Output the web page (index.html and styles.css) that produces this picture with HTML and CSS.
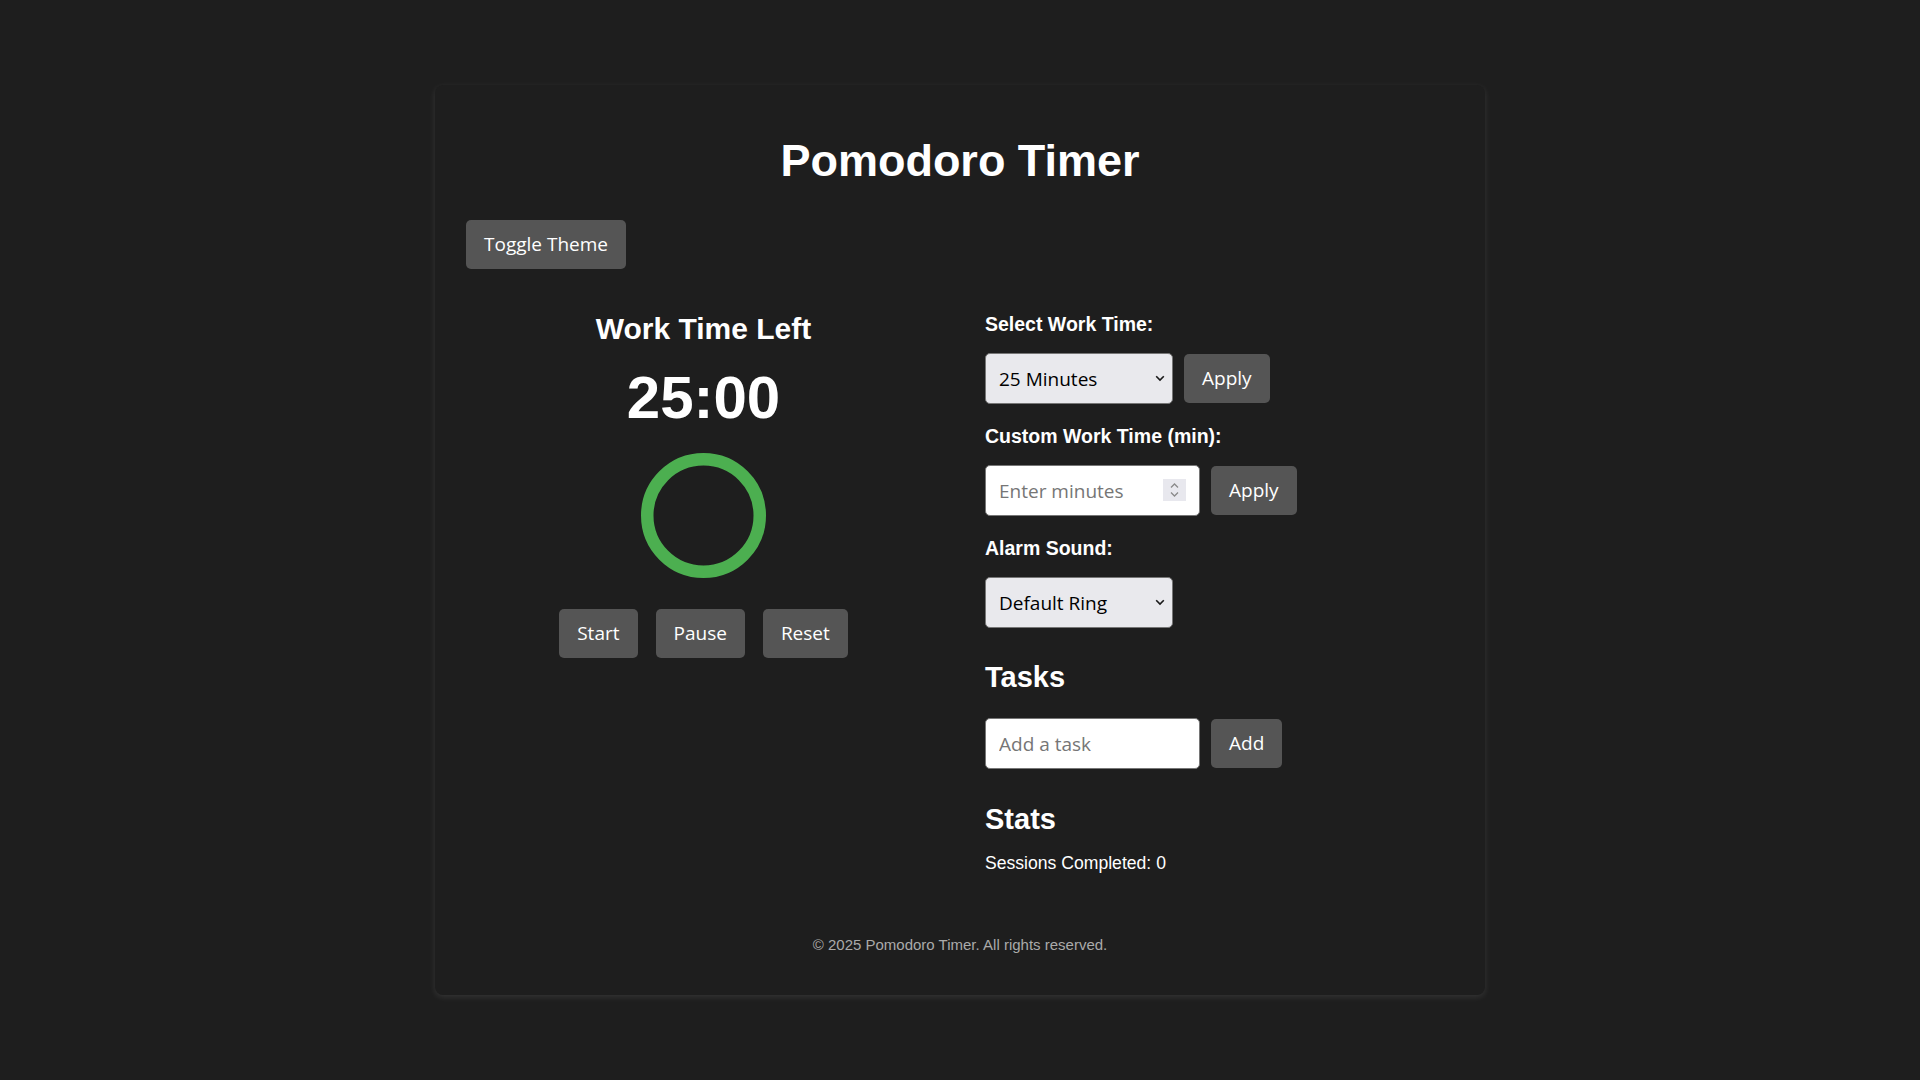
FILE: index.html
```html
<!DOCTYPE html>
<html lang="en">
<head>
<meta charset="utf-8">
<title>Pomodoro Timer</title>
<link rel="stylesheet" href="styles.css">
</head>
<body>
<div class="card">
  <h1 class="title">Pomodoro Timer</h1>
  <div class="toolbar"><button class="btn">Toggle Theme</button></div>
  <div class="main">
    <section class="timer">
      <h2 class="timer-label">Work Time Left</h2>
      <div class="time">25:00</div>
      <svg class="ring" width="125" height="125" viewBox="0 0 125 125">
        <circle cx="62.5" cy="62.5" r="56.25" fill="none" stroke="#4caf50" stroke-width="12.5"/>
      </svg>
      <div class="controls">
        <button class="btn">Start</button>
        <button class="btn">Pause</button>
        <button class="btn">Reset</button>
      </div>
    </section>
    <section class="settings">
      <div class="group">
        <label class="label">Select Work Time:</label>
        <div class="row">
          <span class="select-wrap">
            <select class="select"><option>25 Minutes</option><option>50 Minutes</option></select>
            <svg class="chev" width="10" height="7" viewBox="0 0 10 7"><path d="M1.2 1.2l3.8 3.8 3.8-3.8" fill="none" stroke="#1a1a1a" stroke-width="1.6"/></svg>
          </span>
          <button class="btn">Apply</button>
        </div>
      </div>
      <div class="group">
        <label class="label">Custom Work Time (min):</label>
        <div class="row">
          <span class="input-wrap">
            <input class="input num" type="number" placeholder="Enter minutes">
            <span class="spin"><svg width="23" height="22" viewBox="0 0 23 22"><path d="M8 8.5l3.5-3.5 3.5 3.5M8 13.5l3.5 3.5 3.5-3.5" fill="none" stroke="#8a8a8a" stroke-width="1.3"/></svg></span>
          </span>
          <button class="btn">Apply</button>
        </div>
      </div>
      <div class="group">
        <label class="label">Alarm Sound:</label>
        <div class="row">
          <span class="select-wrap">
            <select class="select"><option>Default Ring</option><option>Bell</option></select>
            <svg class="chev" width="10" height="7" viewBox="0 0 10 7"><path d="M1.2 1.2l3.8 3.8 3.8-3.8" fill="none" stroke="#1a1a1a" stroke-width="1.6"/></svg>
          </span>
        </div>
      </div>
      <h3 class="section-title">Tasks</h3>
      <div class="row">
        <input class="input" type="text" placeholder="Add a task">
        <button class="btn">Add</button>
      </div>
      <h3 class="section-title stats-title">Stats</h3>
      <p class="stat">Sessions Completed: 0</p>
    </section>
  </div>
  <footer class="footer">© 2025 Pomodoro Timer. All rights reserved.</footer>
</div>
</body>
</html>
```
FILE: styles.css
```css
html, body {
  margin: 0;
  padding: 0;
  background: #1e1e1e;
  color: #ffffff;
  font-family: "Liberation Sans", Arial, sans-serif;
}

body {
  display: flex;
  justify-content: center;
  align-items: flex-start;
  min-height: 100vh;
}

.card {
  box-sizing: border-box;
  width: 1050px;
  margin-top: 85px;
  padding: 52px 31px 41px 31px;
  background: #1e1e1e;
  border-radius: 8px;
  box-shadow: 0 2px 6px rgba(255, 255, 255, 0.1);
}

.title {
  margin: 0;
  font-size: 45px;
  line-height: 48px;
  font-weight: bold;
  text-align: center;
}

.toolbar {
  margin-top: 35px;
  display: flex;
}

.btn {
  font-family: "Open Sans", "Noto Sans", sans-serif;
  font-size: 19px;
  line-height: 27px;
  height: 49px;
  padding: 11px 18px;
  border: none;
  border-radius: 5px;
  background: #555555;
  color: #ffffff;
  box-sizing: border-box;
}

.main {
  margin-top: 42px;
  display: grid;
  grid-template-columns: 475px 1fr;
  column-gap: 44px;
  align-items: start;
}

.timer {
  text-align: center;
}

.timer-label {
  margin: 0;
  font-size: 30px;
  line-height: 36px;
  font-weight: bold;
}

.time {
  margin-top: 16px;
  font-size: 60px;
  line-height: 70px;
  font-weight: bold;
}

.ring {
  display: block;
  margin: 20px auto 0;
}

.controls {
  margin-top: 31px;
  display: flex;
  justify-content: center;
  gap: 18px;
}

.settings {
  padding-top: 1px;
}

.group {
  margin-bottom: 20px;
}

.label {
  display: block;
  font-size: 19.5px;
  line-height: 24px;
  font-weight: bold;
  margin-bottom: 17px;
}

.row {
  display: flex;
  align-items: center;
  gap: 11px;
}

.select-wrap,
.input-wrap {
  position: relative;
  display: block;
}

.select {
  appearance: none;
  -webkit-appearance: none;
  display: block;
  box-sizing: border-box;
  width: 188px;
  height: 51px;
  padding: 0 30px 0 13px;
  border: 1px solid #767676;
  border-radius: 5px;
  background: #e9e9ed;
  color: #000000;
  font-family: "Open Sans", "Noto Sans", sans-serif;
  font-size: 19px;
}

.chev {
  position: absolute;
  right: 8px;
  top: 22px;
  pointer-events: none;
}

.input {
  display: block;
  box-sizing: border-box;
  width: 215px;
  height: 51px;
  padding: 0 13px;
  border: 1px solid #767676;
  border-radius: 5px;
  background: #ffffff;
  color: #000000;
  font-family: "Open Sans", "Noto Sans", sans-serif;
  font-size: 19px;
  margin: 0;
}

.input::placeholder {
  color: #767676;
}

.num {
  -moz-appearance: textfield;
}

.num::-webkit-inner-spin-button,
.num::-webkit-outer-spin-button {
  -webkit-appearance: none;
  margin: 0;
}

.spin {
  position: absolute;
  right: 14px;
  top: 14px;
  width: 23px;
  height: 22px;
  background: #e8e8ee;
  display: block;
  pointer-events: none;
}

.spin svg {
  display: block;
}

.section-title {
  margin: 32px 0 24px;
  font-size: 29px;
  line-height: 34px;
  font-weight: bold;
}

.stats-title {
  margin-top: 33px;
  margin-bottom: 16px;
}

.stat {
  margin: 0;
  font-size: 17.6px;
  line-height: 22px;
}

.footer {
  margin-top: 62px;
  text-align: center;
  font-size: 15px;
  line-height: 18px;
  color: #aaaaaa;
}
```
